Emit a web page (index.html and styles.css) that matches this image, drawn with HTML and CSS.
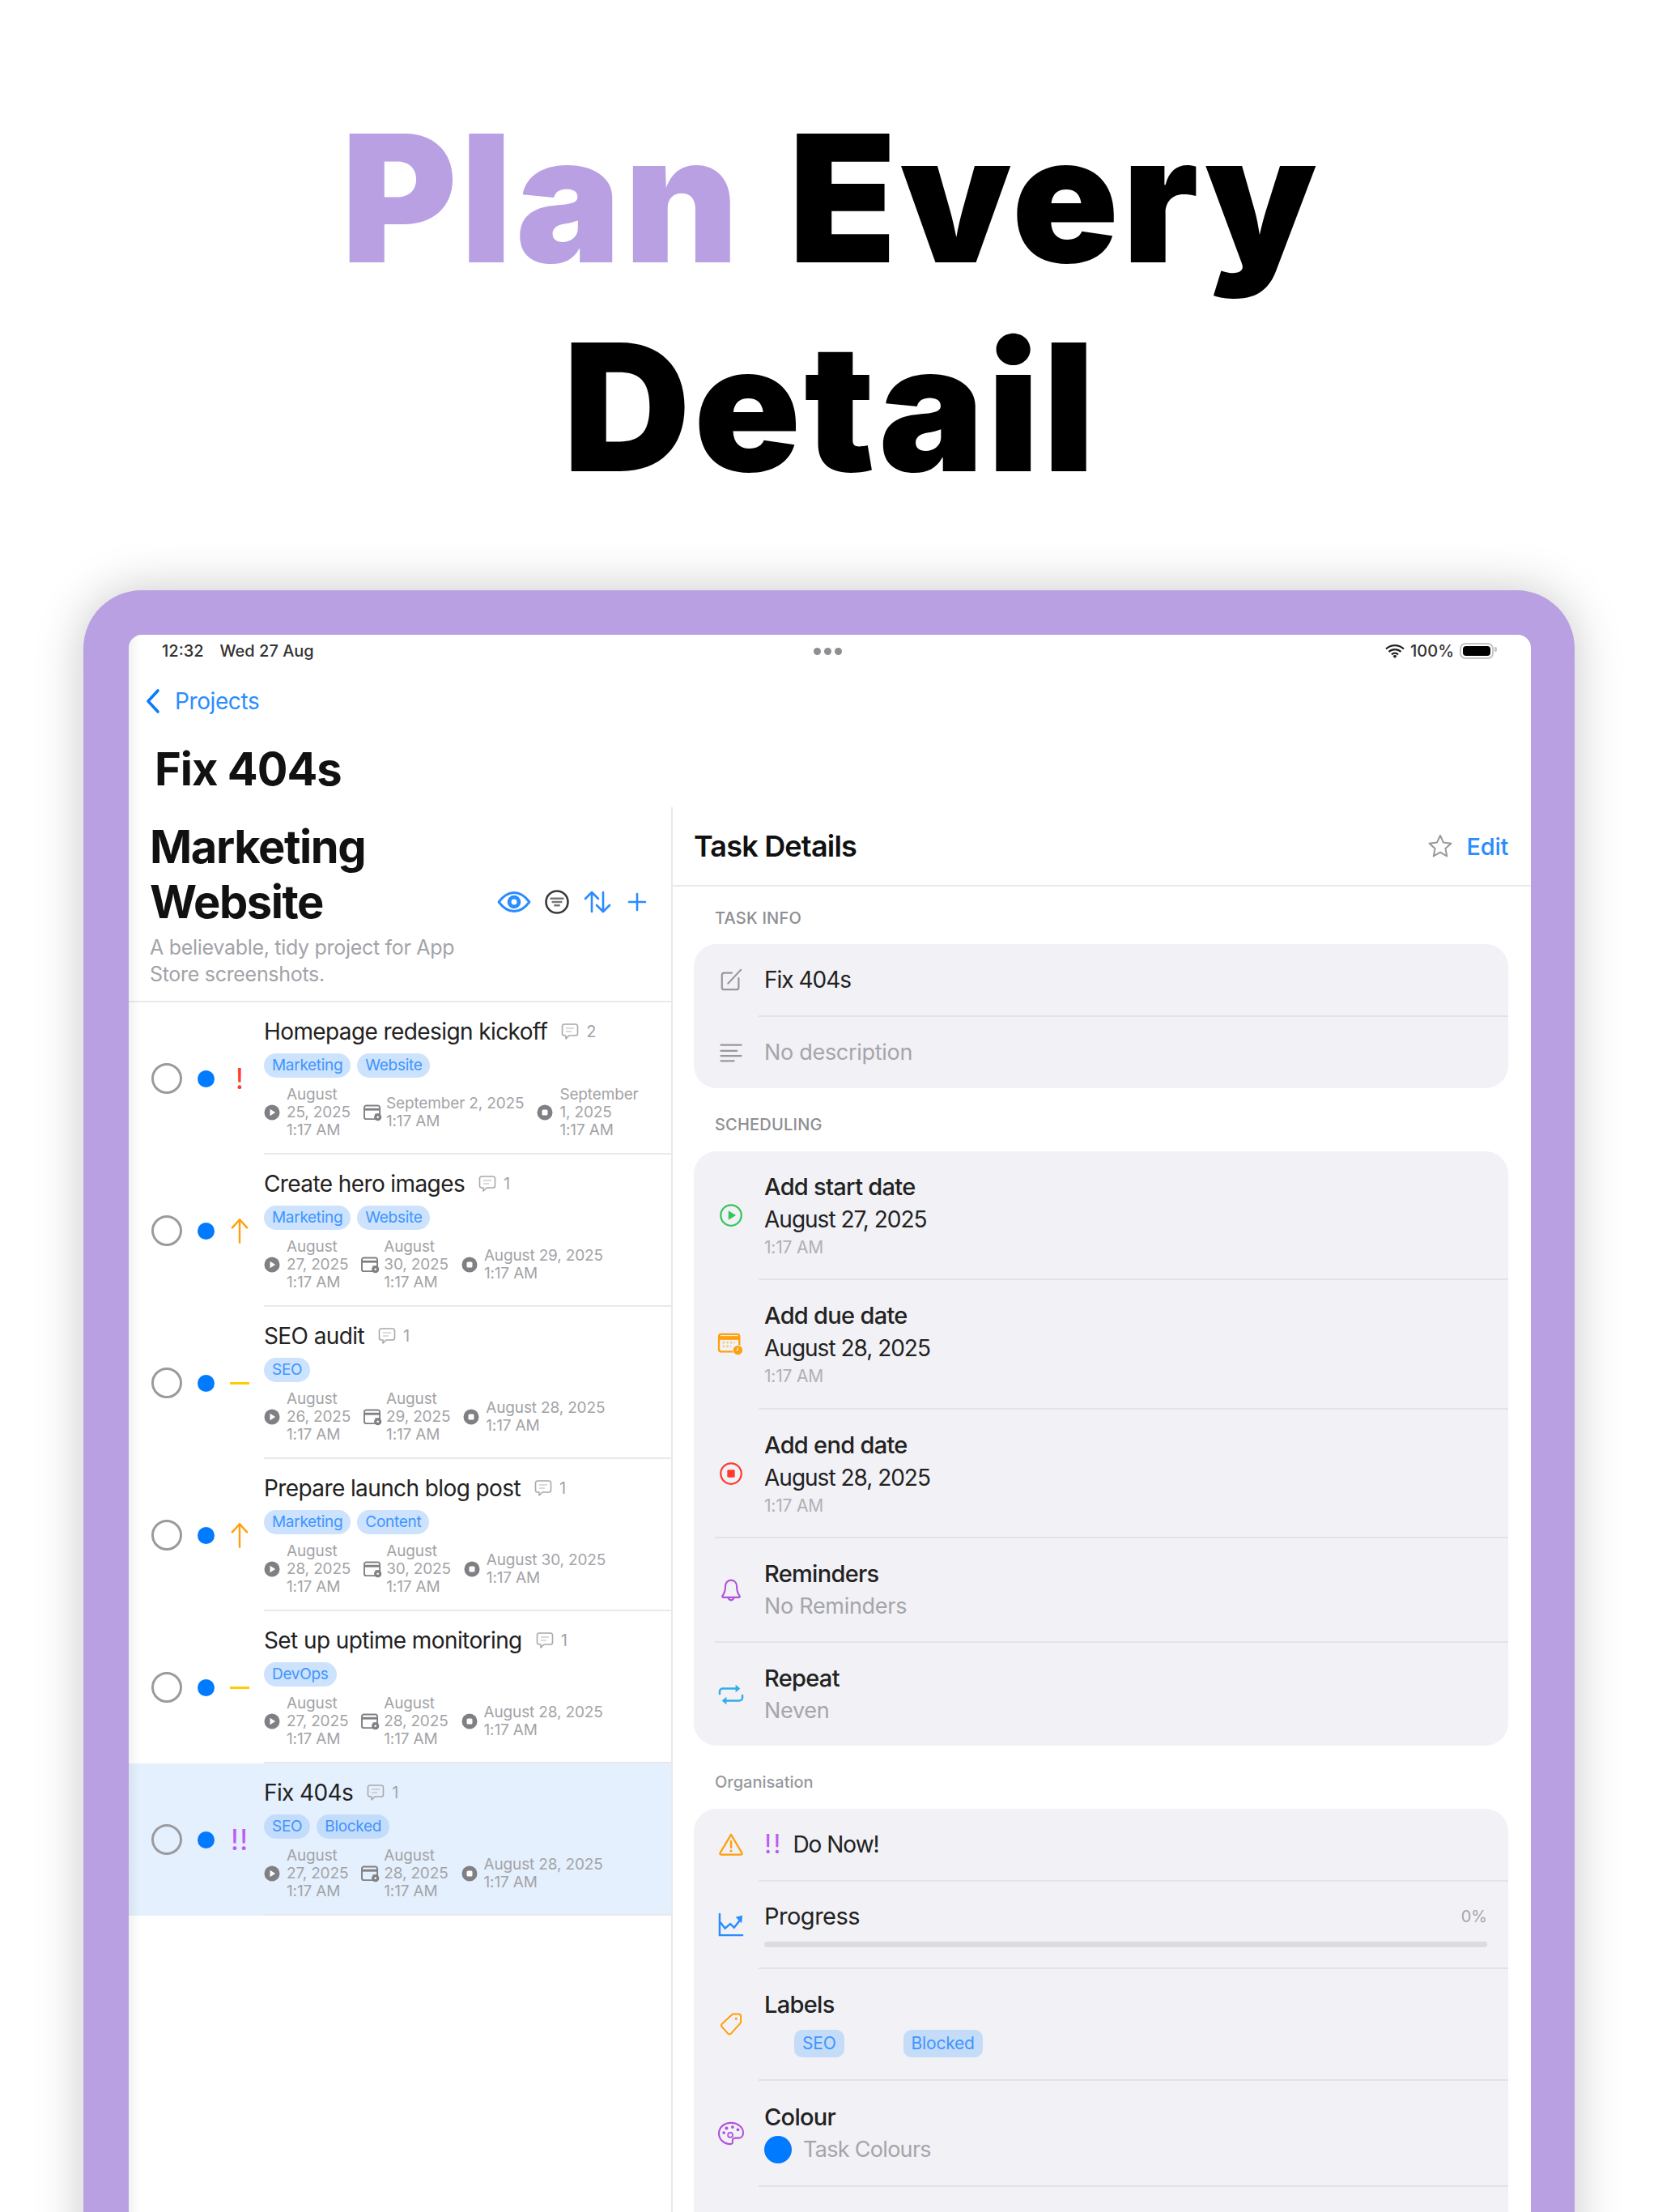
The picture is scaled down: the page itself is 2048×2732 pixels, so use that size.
FILE: index.html
```html
<!DOCTYPE html>
<html lang="en">
<head>
    <meta charset="UTF-8">
    <title>Plan Every Detail</title>
    <link rel="stylesheet" href="styles.css">
</head>
<body>
    <svg class="sprite" xmlns="http://www.w3.org/2000/svg">
        <symbol id="i-back" viewBox="0 0 20 32"><path d="M16 3 4 16l12 13" fill="none" stroke="currentColor" stroke-width="3.6" stroke-linecap="round" stroke-linejoin="round"/></symbol>
        <symbol id="i-eye" viewBox="0 0 40 26"><path d="M2 13C8 5 14 2 20 2s12 3 18 11c-6 8-12 11-18 11S8 21 2 13Z" fill="none" stroke="currentColor" stroke-width="2.8" stroke-linejoin="round"/><circle cx="20" cy="13" r="5.6" fill="none" stroke="currentColor" stroke-width="4.6"/></symbol>
        <symbol id="i-filter" viewBox="0 0 28 28"><circle cx="14" cy="14" r="12.6" fill="none" stroke="currentColor" stroke-width="2.4"/><path d="M7 10h14M9 14h10M11.500 18h5" stroke="#777" stroke-width="2.4" stroke-linecap="round"/></symbol>
        <symbol id="i-sort" viewBox="0 0 34 28"><path d="M10 26V3M2 10l8-8 8 8M24 2v23M16 18l8 8 8-8" fill="none" stroke="currentColor" stroke-width="2.6" stroke-linecap="round" stroke-linejoin="round"/></symbol>
        <symbol id="i-plus" viewBox="0 0 24 24"><path d="M12 2v20M2 12h20" stroke="currentColor" stroke-width="2.6" stroke-linecap="round"/></symbol>
        <symbol id="i-comment" viewBox="0 0 24 24"><path d="M5 3h14a2.500 2.500 0 0 1 2.500 2.500v9A2.500 2.500 0 0 1 19 17h-8l-4 4v-4H5a2.500 2.500 0 0 1-2.500-2.500v-9A2.500 2.500 0 0 1 5 3Z" fill="none" stroke="currentColor" stroke-width="1.6" stroke-linejoin="round"/><path d="M7 8h10M7 12h7" stroke="currentColor" stroke-width="1.500" opacity=".55"/></symbol>
        <symbol id="i-start" viewBox="0 0 20 20"><circle cx="10" cy="10" r="9.500" fill="currentColor"/><path d="M7.500 5.800v8.400l6.600-4.200Z" fill="#fff"/></symbol>
        <symbol id="i-due" viewBox="0 0 24 22"><path d="M3.500 1.500h15a2.500 2.500 0 0 1 2.500 2.500v9h-5v6H3.500A2.500 2.500 0 0 1 1 16.500V4a2.500 2.500 0 0 1 2.500-2.500Z" fill="none" stroke="currentColor" stroke-width="2"/><path d="M1 6.500h20" stroke="currentColor" stroke-width="3"/><circle cx="18.500" cy="16.500" r="4.800" fill="currentColor"/><circle cx="18.500" cy="16.500" r="1.400" fill="#fff"/></symbol>
        <symbol id="i-end" viewBox="0 0 20 20"><circle cx="10" cy="10" r="9.500" fill="currentColor"/><rect x="6.500" y="6.500" width="7" height="7" rx="1.500" fill="#fff"/></symbol>
        <symbol id="i-edit" viewBox="0 0 32 32"><path d="M17 7H7a3 3 0 0 0-3 3v16a3 3 0 0 0 3 3h16a3 3 0 0 0 3-3V14" fill="none" stroke="currentColor" stroke-width="2.400" stroke-linecap="round"/><path d="M12 21 29 3" stroke="currentColor" stroke-width="2.200" stroke-linecap="round"/></symbol>
        <symbol id="i-lines" viewBox="0 0 32 28"><path d="M2 3h28M2 11h22M2 18h28M2 25h18" stroke="currentColor" stroke-width="2.600" stroke-linecap="round"/></symbol>
        <symbol id="i-play" viewBox="0 0 32 32"><circle cx="16" cy="16" r="13.600" fill="none" stroke="currentColor" stroke-width="2.400"/><path d="M12.500 9.800v12.400L22.500 16Z" fill="currentColor"/></symbol>
        <symbol id="i-calendar" viewBox="0 0 36 32"><rect x="2" y="3" width="27" height="23" rx="3" fill="none" stroke="currentColor" stroke-width="2.400"/><path d="M2 8h27" stroke="currentColor" stroke-width="5"/><path d="M7 14h16M7 19h11" stroke="currentColor" stroke-width="2.400" stroke-dasharray="2.500 2.500" opacity=".55"/><circle cx="27" cy="24" r="7" fill="#f1f1f6"/><circle cx="27" cy="24" r="6" fill="currentColor"/><path d="M27 20.500V24h-2.500" fill="none" stroke="#f1f1f6" stroke-width="1.300"/></symbol>
        <symbol id="i-stop" viewBox="0 0 32 32"><circle cx="16" cy="16" r="13.600" fill="none" stroke="currentColor" stroke-width="2.400"/><rect x="11" y="11" width="10" height="10" rx="1.500" fill="currentColor"/></symbol>
        <symbol id="i-bell" viewBox="0 0 32 34"><path d="M16 3c-5 0-8 4-8 9 0 6-1 9-4 13-.7 1-.2 2 1 2h22c1.200 0 1.700-1 1-2-3-4-4-7-4-13 0-5-3-9-8-9Z" fill="none" stroke="currentColor" stroke-width="2.400" stroke-linejoin="round"/><path d="M12 27a4 4 0 0 0 8 0" fill="none" stroke="currentColor" stroke-width="2.400"/></symbol>
        <symbol id="i-repeat" viewBox="0 0 34 32"><path d="M2 15v-3a4 4 0 0 1 4-4h20M32 17v3a4 4 0 0 1-4 4H8" fill="none" stroke="currentColor" stroke-width="2.600" stroke-linecap="round"/><path d="M23 3l6 5-6 5ZM11 19l-6 5 6 5Z" fill="currentColor"/></symbol>
        <symbol id="i-warning" viewBox="0 0 34 32"><path d="M17 3 2.500 27.500A1.500 1.500 0 0 0 4 29.500h26a1.500 1.500 0 0 0 1.500-2L17 3Z" fill="none" stroke="currentColor" stroke-width="2.400" stroke-linejoin="round"/><path d="M17 12v8" stroke="currentColor" stroke-width="2.600" stroke-linecap="round"/><circle cx="17" cy="24.500" r="1.600" fill="currentColor"/></symbol>
        <symbol id="i-chart" viewBox="0 0 34 32"><path d="M2 2v28h30" fill="none" stroke="currentColor" stroke-width="2.600" stroke-linecap="round"/><path d="M3 13l6 8 7-6 5 5 8-10" fill="none" stroke="currentColor" stroke-width="2.600"/><path d="M23 6l9-2-1 10Z" fill="currentColor"/></symbol>
        <symbol id="i-tag" viewBox="0 0 34 36"><path d="M21 3h7a3.500 3.500 0 0 1 3.500 3.500v8a4 4 0 0 1-1 2.500L17 32a3 3 0 0 1-4.300.2L3.500 22a3 3 0 0 1 0-4.200L18 4.200A4 4 0 0 1 21 3Z" fill="none" stroke="currentColor" stroke-width="2.400" stroke-linejoin="round"/><circle cx="24.500" cy="10" r="1.800" fill="currentColor"/></symbol>
        <symbol id="i-palette" viewBox="0 0 36 32"><path d="M18 2C9 2 2 8 2 16s7 14 15 14c2.500 0 3.500-1.500 3-3.500-.6-2.500.8-4.500 3.500-4.500h5C32 22 34 19 34 15 34 8 27 2 18 2Z" fill="none" stroke="currentColor" stroke-width="2.200"/><circle cx="8.500" cy="15" r="2" fill="currentColor"/><circle cx="12" cy="9" r="2.200" fill="currentColor"/><circle cx="20" cy="7.500" r="2" fill="currentColor"/><circle cx="27" cy="11" r="2" fill="currentColor"/><circle cx="17" cy="18" r="3.200" fill="none" stroke="currentColor" stroke-width="1.800"/></symbol>
        <symbol id="i-star" viewBox="0 0 32 32"><path d="m16 3 4 8.600 9.400 1.100-7 6.400 1.900 9.300L16 23.700l-8.300 4.700 1.900-9.300-7-6.400 9.400-1.100Z" fill="none" stroke="currentColor" stroke-width="2" stroke-linejoin="round"/></symbol>
        <symbol id="i-wifi" viewBox="0 0 24 18"><path d="M1 6.500a16 16 0 0 1 22 0M4.500 10a11 11 0 0 1 15 0M8 13.300a6 6 0 0 1 8 0" fill="none" stroke="currentColor" stroke-width="2.300"/><path d="m12 18-2.500-2.800a3.500 3.500 0 0 1 5 0Z" fill="currentColor"/></symbol>
    </svg>

    <h1 class="headline"><span class="headline-accent">Plan</span> Every<br>Detail</h1>

    <div class="frame">
        <div class="screen">
            <div class="status-bar">
                <div class="status-left"><span>12:32</span><span>Wed 27 Aug</span></div>
                <div class="status-dots"><i></i><i></i><i></i></div>
                <div class="status-right">
                    <svg class="wifi"><use href="#i-wifi"/></svg>
                    <span>100%</span>
                    <div class="battery"><div class="battery-fill"></div></div>
                </div>
            </div>

            <div class="nav-back">
                <svg class="back-icon"><use href="#i-back"/></svg>
                <span>Projects</span>
            </div>
            <div class="page-title">Fix 404s</div>

            <div class="split">
                <div class="task-pane">
                    <div class="project-head">
                        <div class="project-top">
                            <h2 class="project-name">Marketing<br>Website</h2>
                            <div class="project-tools">
                                <svg class="tool-eye"><use href="#i-eye"/></svg>
                                <svg class="tool-filter"><use href="#i-filter"/></svg>
                                <svg class="tool-sort"><use href="#i-sort"/></svg>
                                <svg class="tool-plus"><use href="#i-plus"/></svg>
                            </div>
                        </div>
                        <p class="project-desc">A believable, tidy project for App<br>Store screenshots.</p>
                    </div>

                    <div class="task">
                        <div class="task-marks">
                            <div class="check"></div><div class="dot"></div>
                            <div class="prio prio-red">!</div>
                        </div>
                        <div class="task-body">
                            <div class="task-title"><span>Homepage redesign kickoff</span><svg class="comment-icon"><use href="#i-comment"/></svg><span class="comment-count">2</span></div>
                            <div class="chips"><span class="chip">Marketing</span><span class="chip">Website</span></div>
                            <div class="dates">
                                <div class="date"><svg class="date-icon"><use href="#i-start"/></svg><div>August<br>25, 2025<br>1:17 AM</div></div>
                                <div class="date"><svg class="date-icon date-icon-due"><use href="#i-due"/></svg><div>September 2, 2025<br>1:17 AM</div></div>
                                <div class="date"><svg class="date-icon"><use href="#i-end"/></svg><div>September<br>1, 2025<br>1:17 AM</div></div>
                            </div>
                        </div>
                    </div>

                    <div class="task">
                        <div class="task-marks">
                            <div class="check"></div><div class="dot"></div>
                            <div class="prio"><svg class="prio-arrow" viewBox="0 0 24 36"><path d="M12 34V3M2 14 12 3l10 11" fill="none" stroke="currentColor" stroke-width="2.600" stroke-linecap="round" stroke-linejoin="round"/></svg></div>
                        </div>
                        <div class="task-body">
                            <div class="task-title"><span>Create hero images</span><svg class="comment-icon"><use href="#i-comment"/></svg><span class="comment-count">1</span></div>
                            <div class="chips"><span class="chip">Marketing</span><span class="chip">Website</span></div>
                            <div class="dates">
                                <div class="date"><svg class="date-icon"><use href="#i-start"/></svg><div>August<br>27, 2025<br>1:17 AM</div></div>
                                <div class="date"><svg class="date-icon date-icon-due"><use href="#i-due"/></svg><div>August<br>30, 2025<br>1:17 AM</div></div>
                                <div class="date"><svg class="date-icon"><use href="#i-end"/></svg><div>August 29, 2025<br>1:17 AM</div></div>
                            </div>
                        </div>
                    </div>

                    <div class="task">
                        <div class="task-marks">
                            <div class="check"></div><div class="dot"></div>
                            <div class="prio"><div class="prio-dash"></div></div>
                        </div>
                        <div class="task-body">
                            <div class="task-title"><span>SEO audit</span><svg class="comment-icon"><use href="#i-comment"/></svg><span class="comment-count">1</span></div>
                            <div class="chips"><span class="chip">SEO</span></div>
                            <div class="dates">
                                <div class="date"><svg class="date-icon"><use href="#i-start"/></svg><div>August<br>26, 2025<br>1:17 AM</div></div>
                                <div class="date"><svg class="date-icon date-icon-due"><use href="#i-due"/></svg><div>August<br>29, 2025<br>1:17 AM</div></div>
                                <div class="date"><svg class="date-icon"><use href="#i-end"/></svg><div>August 28, 2025<br>1:17 AM</div></div>
                            </div>
                        </div>
                    </div>

                    <div class="task">
                        <div class="task-marks">
                            <div class="check"></div><div class="dot"></div>
                            <div class="prio"><svg class="prio-arrow" viewBox="0 0 24 36"><path d="M12 34V3M2 14 12 3l10 11" fill="none" stroke="currentColor" stroke-width="2.600" stroke-linecap="round" stroke-linejoin="round"/></svg></div>
                        </div>
                        <div class="task-body">
                            <div class="task-title"><span>Prepare launch blog post</span><svg class="comment-icon"><use href="#i-comment"/></svg><span class="comment-count">1</span></div>
                            <div class="chips"><span class="chip">Marketing</span><span class="chip">Content</span></div>
                            <div class="dates">
                                <div class="date"><svg class="date-icon"><use href="#i-start"/></svg><div>August<br>28, 2025<br>1:17 AM</div></div>
                                <div class="date"><svg class="date-icon date-icon-due"><use href="#i-due"/></svg><div>August<br>30, 2025<br>1:17 AM</div></div>
                                <div class="date"><svg class="date-icon"><use href="#i-end"/></svg><div>August 30, 2025<br>1:17 AM</div></div>
                            </div>
                        </div>
                    </div>

                    <div class="task">
                        <div class="task-marks">
                            <div class="check"></div><div class="dot"></div>
                            <div class="prio"><div class="prio-dash"></div></div>
                        </div>
                        <div class="task-body">
                            <div class="task-title"><span>Set up uptime monitoring</span><svg class="comment-icon"><use href="#i-comment"/></svg><span class="comment-count">1</span></div>
                            <div class="chips"><span class="chip">DevOps</span></div>
                            <div class="dates">
                                <div class="date"><svg class="date-icon"><use href="#i-start"/></svg><div>August<br>27, 2025<br>1:17 AM</div></div>
                                <div class="date"><svg class="date-icon date-icon-due"><use href="#i-due"/></svg><div>August<br>28, 2025<br>1:17 AM</div></div>
                                <div class="date"><svg class="date-icon"><use href="#i-end"/></svg><div>August 28, 2025<br>1:17 AM</div></div>
                            </div>
                        </div>
                    </div>

                    <div class="task task-selected">
                        <div class="task-marks">
                            <div class="check"></div><div class="dot"></div>
                            <div class="prio prio-purple">!!</div>
                        </div>
                        <div class="task-body">
                            <div class="task-title"><span>Fix 404s</span><svg class="comment-icon"><use href="#i-comment"/></svg><span class="comment-count">1</span></div>
                            <div class="chips"><span class="chip">SEO</span><span class="chip">Blocked</span></div>
                            <div class="dates">
                                <div class="date"><svg class="date-icon"><use href="#i-start"/></svg><div>August<br>27, 2025<br>1:17 AM</div></div>
                                <div class="date"><svg class="date-icon date-icon-due"><use href="#i-due"/></svg><div>August<br>28, 2025<br>1:17 AM</div></div>
                                <div class="date"><svg class="date-icon"><use href="#i-end"/></svg><div>August 28, 2025<br>1:17 AM</div></div>
                            </div>
                        </div>
                    </div>
                </div>

                <div class="detail-pane">
                    <div class="detail-head">
                        <h3 class="detail-title">Task Details</h3>
                        <svg class="star"><use href="#i-star"/></svg>
                        <span class="edit">Edit</span>
                    </div>
                    <div class="detail-body">
                        <div class="group-label group-label-first">TASK INFO</div>
                        <div class="card">
                            <div class="row row-88">
                                <svg class="row-icon icon-gray"><use href="#i-edit"/></svg>
                                <div class="row-main"><div class="row-title row-date">Fix 404s</div></div>
                            </div>
                            <div class="sep"></div>
                            <div class="row row-88">
                                <svg class="row-icon row-icon-small icon-gray"><use href="#i-lines"/></svg>
                                <div class="row-main"><div class="row-sub">No description</div></div>
                            </div>
                        </div>

                        <div class="group-label">SCHEDULING</div>
                        <div class="card">
                            <div class="row row-157">
                                <svg class="row-icon icon-green"><use href="#i-play"/></svg>
                                <div class="row-main"><div class="row-title row-strong">Add start date</div><div class="row-title row-date">August 27, 2025</div><div class="row-time">1:17 AM</div></div>
                            </div>
                            <div class="sep"></div>
                            <div class="row row-158">
                                <svg class="row-icon icon-orange"><use href="#i-calendar"/></svg>
                                <div class="row-main"><div class="row-title row-strong">Add due date</div><div class="row-title row-date">August 28, 2025</div><div class="row-time">1:17 AM</div></div>
                            </div>
                            <div class="sep"></div>
                            <div class="row row-157">
                                <svg class="row-icon icon-red"><use href="#i-stop"/></svg>
                                <div class="row-main"><div class="row-title row-strong">Add end date</div><div class="row-title row-date">August 28, 2025</div><div class="row-time">1:17 AM</div></div>
                            </div>
                            <div class="sep sep-long"></div>
                            <div class="row row-127">
                                <svg class="row-icon icon-purple"><use href="#i-bell"/></svg>
                                <div class="row-main"><div class="row-title row-strong">Reminders</div><div class="row-sub">No Reminders</div></div>
                            </div>
                            <div class="sep sep-long"></div>
                            <div class="row row-127">
                                <svg class="row-icon icon-sky"><use href="#i-repeat"/></svg>
                                <div class="row-main"><div class="row-title row-strong">Repeat</div><div class="row-sub">Neven</div></div>
                            </div>
                        </div>

                        <div class="group-label group-label-plain">Organisation</div>
                        <div class="card">
                            <div class="row row-88">
                                <svg class="row-icon icon-orange"><use href="#i-warning"/></svg>
                                <div class="row-main row-inline"><span class="urgency">!!</span><span class="row-title row-date">Do Now!</span></div>
                            </div>
                            <div class="sep"></div>
                            <div class="row row-106">
                                <svg class="row-icon icon-blue"><use href="#i-chart"/></svg>
                                <div class="row-main">
                                    <div class="progress-top"><span class="row-title">Progress</span><span class="progress-value">0%</span></div>
                                    <div class="progress-bar"></div>
                                </div>
                            </div>
                            <div class="sep"></div>
                            <div class="row row-136">
                                <svg class="row-icon icon-orange"><use href="#i-tag"/></svg>
                                <div class="row-main row-main-labels">
                                    <div class="row-title row-strong">Labels</div>
                                    <div class="label-list"><span class="label">SEO</span><span class="label">Blocked</span></div>
                                </div>
                            </div>
                            <div class="sep"></div>
                            <div class="row row-129">
                                <svg class="row-icon icon-purple"><use href="#i-palette"/></svg>
                                <div class="row-main">
                                    <div class="row-title row-strong">Colour</div>
                                    <div class="colour-line"><div class="colour-dot"></div><span class="row-sub row-sub-tight">Task Colours</span></div>
                                </div>
                            </div>
                            <div class="sep"></div>
                            <div class="row-cut"><div class="row-title">Assignee</div></div>
                        </div>
                    </div>
                </div>
            </div>
        </div>
    </div>
</body>
</html>
```
FILE: styles.css
```css
/* Page */
* {
    box-sizing: border-box;
}

html, body {
    margin: 0;
    height: 2732px;
    overflow: hidden;
}

body {
    font-family: Inter, "Noto Sans", sans-serif;
    background: #fff;
    color: #1f1f21;
}

.sprite {
    display: none;
}

svg {
    display: block;
    flex: none;
}

.headline {
    margin: 0;
    padding: 116px 0 0 4px;
    height: 729px;
    font-size: 218px;
    font-weight: 900;
    line-height: 258px;
    letter-spacing: 4px;
    word-spacing: 10px;
    text-align: center;
    color: #000;
}

.headline-accent {
    color: #b8a0e2;
}

/* Tablet frame */
.frame {
    width: 1842px;
    height: 2200px;
    margin-left: 103px;
    padding: 55px 54px 0 56px;
    background: #b8a0e2;
    border-radius: 72px 72px 0 0;
    box-shadow: 0 0 60px rgba(0, 0, 0, 0.22);
}

.screen {
    position: relative;
    height: 100%;
    background: #fff;
    border-radius: 16px 16px 0 0;
    overflow: hidden;
}

.screen::before {
    content: "";
    position: absolute;
    top: 0;
    bottom: 0;
    left: 0;
    width: 14px;
    background: linear-gradient(90deg, rgba(0, 0, 0, 0.05), rgba(0, 0, 0, 0));
    pointer-events: none;
}

/* Status bar */
.status-bar {
    display: grid;
    grid-template-columns: 1fr auto 1fr;
    align-items: center;
    height: 40px;
    padding: 0 46px 0 41px;
    font-size: 20px;
    font-weight: 500;
    color: #333;
}

.status-left {
    display: flex;
    gap: 20px;
}

.status-dots {
    display: flex;
    gap: 4px;
}

.status-dots i {
    width: 9px;
    height: 9px;
    border-radius: 50%;
    background: #8e8e93;
}

.status-right {
    display: flex;
    align-items: center;
    justify-content: flex-end;
    gap: 7px;
}

.wifi {
    width: 24px;
    height: 18px;
    color: #222;
}

.battery {
    position: relative;
    width: 42px;
    height: 20px;
    padding: 2px;
    border: 2px solid #c4c4c4;
    border-radius: 7px;
}

.battery::after {
    content: "";
    position: absolute;
    top: 3px;
    right: -6px;
    width: 3px;
    height: 6px;
    border-radius: 0 2px 2px 0;
    background: #c4c4c4;
}

.battery-fill {
    height: 100%;
    background: #000;
    border-radius: 4px;
}

/* Navigation */
.nav-back {
    display: flex;
    align-items: center;
    height: 84px;
    padding-left: 20px;
    gap: 17px;
    font-size: 28px;
    color: #2a8cff;
    letter-spacing: -0.4px;
}

.back-icon {
    width: 20px;
    height: 32px;
    color: #0a7aff;
}

.page-title {
    height: 89px;
    padding-left: 32px;
    font-size: 56px;
    font-weight: 700;
    line-height: 84px;
    letter-spacing: -1px;
    color: #111;
}

.split {
    display: grid;
    grid-template-columns: 672px 1fr;
}

/* Task list */
.task-pane {
    border-right: 2px solid #e9e9eb;
}

.project-head {
    height: 241px;
    padding: 15px 0 0 26px;
    border-bottom: 2px solid #e9e9eb;
}

.project-top {
    display: flex;
    align-items: flex-end;
    justify-content: space-between;
    padding-right: 30px;
}

.project-name {
    margin: 0;
    font-size: 56px;
    font-weight: 700;
    line-height: 68px;
    letter-spacing: -1.4px;
    color: #111;
}

.project-tools {
    display: flex;
    align-items: center;
    height: 68px;
    color: #2a8cff;
}

.tool-eye {
    width: 42px;
    height: 28px;
}

.tool-filter {
    width: 30px;
    height: 30px;
    margin-left: 17px;
    color: #3a3a3c;
}

.tool-sort {
    width: 34px;
    height: 28px;
    margin-left: 18px;
}

.tool-plus {
    width: 24px;
    height: 24px;
    margin-left: 20px;
}

.project-desc {
    margin: 6px 0 0;
    font-size: 25px;
    line-height: 33px;
    letter-spacing: -0.3px;
    color: #a3a3a8;
}

.task {
    display: flex;
    height: 188px;
}

.task-selected {
    background: #e4f0fd;
}

.task-marks {
    display: flex;
    flex: none;
    align-items: center;
    width: 167px;
    padding-left: 28px;
}

.check {
    width: 38px;
    height: 38px;
    border: 3px solid #9b9b9f;
    border-radius: 50%;
}

.dot {
    width: 21px;
    height: 21px;
    margin-left: 19px;
    border-radius: 50%;
    background: #007aff;
}

.prio {
    display: flex;
    align-items: center;
    justify-content: center;
    width: 28px;
    height: 40px;
    margin-left: 17px;
    font-size: 36px;
    font-weight: 400;
    line-height: 40px;
    color: #ff9f0a;
}

.prio-red {
    color: #ff3b30;
}

.prio-purple {
    color: #bf5af2;
    letter-spacing: 1px;
}

.prio-arrow {
    width: 22px;
    height: 34px;
}

.prio-dash {
    width: 24px;
    height: 3px;
    background: #ffcc00;
}

.task-body {
    flex: 1;
    min-width: 0;
    padding-top: 18px;
    border-bottom: 2px solid #e9e9eb;
}

.task-title {
    display: flex;
    align-items: center;
    height: 36px;
    font-size: 28px;
    letter-spacing: -0.6px;
    color: #222;
}

.comment-icon {
    width: 24px;
    height: 24px;
    margin-left: 16px;
    color: #a8a8ad;
}

.comment-count {
    margin-left: 8px;
    font-size: 20px;
    letter-spacing: 0;
    color: #a3a3a8;
}

.chips {
    display: flex;
    gap: 8px;
    margin-top: 9px;
}

.chip {
    height: 30px;
    padding: 0 10px;
    border-radius: 15px;
    background: #cce2fd;
    font-size: 19px;
    line-height: 30px;
    letter-spacing: -0.3px;
    color: #3f95ff;
}

.task-selected .chip {
    background: #c4dcfb;
}

.dates {
    display: flex;
    align-items: center;
    gap: 16px;
    height: 66px;
    margin-top: 10px;
    font-size: 19px;
    line-height: 22px;
    letter-spacing: -0.15px;
    color: #a3a3a7;
}

.date {
    display: flex;
    align-items: center;
    gap: 8px;
}

.date-icon {
    width: 20px;
    height: 20px;
    color: #808084;
}

.date-icon-due {
    width: 23px;
    height: 21px;
    margin-right: -3px;
}

/* Task details */
.detail-head {
    display: flex;
    align-items: center;
    height: 98px;
    padding: 0 28px 0 26px;
    border-bottom: 2px solid #e9e9eb;
}

.detail-title {
    flex: 1;
    margin: 0;
    font-size: 36px;
    font-weight: 600;
    letter-spacing: -0.8px;
    color: #111;
}

.star {
    width: 32px;
    height: 32px;
    color: #98989d;
}

.edit {
    margin-left: 17px;
    font-size: 29px;
    font-weight: 500;
    letter-spacing: -0.3px;
    color: #2a8cff;
}

.detail-body {
    padding: 0 28px 0 26px;
}

.group-label {
    height: 78px;
    padding: 33px 0 0 26px;
    font-size: 20px;
    font-weight: 500;
    line-height: 24px;
    letter-spacing: 0.2px;
    color: #8e8e93;
}

.group-label-first {
    height: 71px;
    padding-top: 27px;
}

.group-label-plain {
    letter-spacing: 0;
    color: #98989d;
}

.card {
    background: #f1f1f6;
    border-radius: 28px;
}

.row {
    display: flex;
    align-items: center;
    padding-left: 26px;
}

.row-88 { height: 88px; }
.row-106 { height: 106px; }
.row-127 { height: 127px; }
.row-129 { height: 129px; }
.row-136 { height: 136px; }
.row-157 { height: 157px; }
.row-158 { height: 158px; }

.row-icon {
    width: 40px;
    height: 30px;
    margin-right: 21px;
}

.row-icon-small {
    height: 25px;
}

.icon-gray { color: #98989d; }
.icon-green { color: #34c759; }
.icon-orange { color: #ff9f0a; }
.icon-red { color: #ff3b30; }
.icon-purple { color: #af52de; }
.icon-sky { color: #32ade6; }
.icon-blue { color: #2a8cff; }

.row-main {
    flex: 1;
    min-width: 0;
    padding-right: 26px;
}

.row-main-labels {
    padding-bottom: 4px;
}

.row-inline {
    display: flex;
    align-items: center;
    gap: 13px;
}

.row-title {
    font-size: 29px;
    line-height: 40px;
    letter-spacing: -0.5px;
    color: #222;
}

.row-strong {
    font-weight: 500;
    letter-spacing: -0.7px;
}

.row-date {
    font-size: 28px;
    letter-spacing: -1px;
}

.row-sub {
    font-size: 27px;
    line-height: 40px;
    letter-spacing: -0.3px;
    color: #a5a5aa;
}

.row-sub-tight {
    letter-spacing: -0.7px;
}

.row-time {
    font-size: 21px;
    line-height: 30px;
    letter-spacing: -0.2px;
    color: #b0b0b5;
}

.sep {
    height: 2px;
    margin-left: 80px;
    background: #e2e2e7;
}

.sep-long {
    margin-left: 26px;
}

.urgency {
    font-size: 32px;
    line-height: 40px;
    letter-spacing: 2px;
    color: #bf5af2;
}

.progress-top {
    display: flex;
    align-items: center;
    justify-content: space-between;
    margin-top: -2px;
}

.progress-value {
    font-size: 20px;
    color: #a5a5aa;
}

.progress-bar {
    height: 7px;
    margin-top: 11px;
    border-radius: 4px;
    background: #dcdce0;
}

.label-list {
    display: flex;
    gap: 73px;
    margin-top: 11px;
    padding-left: 37px;
}

.label {
    height: 34px;
    padding: 0 10px;
    border-radius: 10px;
    background: #c4dcf8;
    font-size: 21px;
    line-height: 34px;
    letter-spacing: -0.2px;
    color: #3f95ff;
}

.colour-line {
    display: flex;
    align-items: center;
    gap: 14px;
}

.colour-dot {
    width: 34px;
    height: 34px;
    border-radius: 50%;
    background: #007aff;
}

.row-cut {
    padding: 25px 0 0 87px;
}
```
